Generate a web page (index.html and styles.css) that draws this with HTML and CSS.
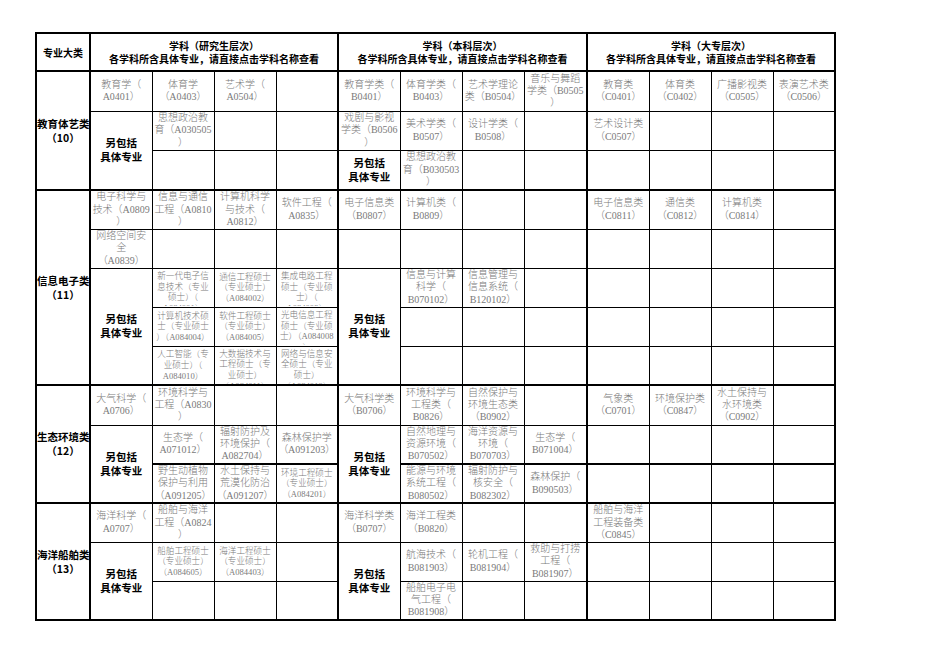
FILE: index.html
```html
<!DOCTYPE html>
<html lang="zh-CN">
<head>
<meta charset="utf-8">
<title>专业大类对照表</title>
<link rel="stylesheet" href="styles.css">
</head>
<body>
<table class="sheet">
<colgroup class="g0"><col class="w0"></colgroup>
<colgroup class="grp"><col class="w"><col class="w"><col class="w"><col class="w"></colgroup>
<colgroup class="grp"><col class="w"><col class="w"><col class="w"><col class="w1"></colgroup>
<colgroup class="grp"><col class="w"><col class="w"><col class="w"><col class="w"></colgroup>
<thead>
<tr class="hr">
<th class="hd">专业大类</th>
<th class="hd" colspan="4">学科（研究生层次）<br>各学科所含具体专业，请直接点击学科名称查看</th>
<th class="hd" colspan="4">学科（本科层次）<br>各学科所含具体专业，请直接点击学科名称查看</th>
<th class="hd" colspan="4">学科（大专层次）<br>各学科所含具体专业，请直接点击学科名称查看</th>
</tr>
</thead>

<tbody class="cg">
<tr class="h40">
<td class="cat" rowspan="3">教育体艺类<br>（10）</td>
<td><div class="c">教育学（<br>A0401）</div></td>
<td><div class="c">体育学<br>（A0403）</div></td>
<td><div class="c">艺术学（<br>A0504）</div></td>
<td></td>
<td><div class="c">教育学类（<br>B0401）</div></td>
<td><div class="c">体育学类（<br>B0403）</div></td>
<td><div class="c">艺术学理论<br>类（B0504）</div></td>
<td><div class="c">音乐与舞蹈<br>学类（B0505<br>）</div></td>
<td><div class="c">教育类<br>（C0401）</div></td>
<td><div class="c">体育类<br>（C0402）</div></td>
<td><div class="c">广播影视类<br>（C0505）</div></td>
<td><div class="c">表演艺术类<br>（C0506）</div></td>
</tr>
<tr class="h39">
<td class="lbl" rowspan="2">另包括<br>具体专业</td>
<td><div class="c">思想政治教<br>育（A030505<br>）</div></td>
<td></td>
<td></td>
<td><div class="c">戏剧与影视<br>学类（B0506<br>）</div></td>
<td><div class="c">美术学类（<br>B0507）</div></td>
<td><div class="c">设计学类（<br>B0508）</div></td>
<td></td>
<td><div class="c">艺术设计类<br>（C0507）</div></td>
<td></td><td></td><td></td>
</tr>
<tr class="h40">
<td></td><td></td><td></td>
<td class="lbl">另包括<br>具体专业</td>
<td><div class="c">思想政治教<br>育（B030503<br>）</div></td>
<td></td><td></td>
<td></td><td></td><td></td><td></td>
</tr>
</tbody>

<tbody class="cg">
<tr class="h39">
<td class="cat" rowspan="5">信息电子类<br>（11）</td>
<td><div class="c">电子科学与<br>技术（A0809<br>）</div></td>
<td><div class="c">信息与通信<br>工程（A0810<br>）</div></td>
<td><div class="c">计算机科学<br>与技术（<br>A0812）</div></td>
<td><div class="c">软件工程（<br>A0835）</div></td>
<td><div class="c">电子信息类<br>（B0807）</div></td>
<td><div class="c">计算机类（<br>B0809）</div></td>
<td></td><td></td>
<td><div class="c">电子信息类<br>（C0811）</div></td>
<td><div class="c">通信类<br>（C0812）</div></td>
<td><div class="c">计算机类<br>（C0814）</div></td>
<td></td>
</tr>
<tr class="h39">
<td><div class="c">网络空间安<br>全<br>（A0839）</div></td>
<td></td><td></td><td></td>
<td></td><td></td><td></td><td></td>
<td></td><td></td><td></td><td></td>
</tr>
<tr class="h39">
<td class="lbl" rowspan="3">另包括<br>具体专业</td>
<td><div class="c s t">新一代电子信<br>息技术（专业<br>硕士）（<br>A084001）</div></td>
<td><div class="c s">通信工程硕士<br>（专业硕士）<br>（A084002）</div></td>
<td><div class="c s t">集成电路工程<br>硕士（专业硕<br>士）（<br>A084003）</div></td>
<td class="lbl" rowspan="3">另包括<br>具体专业</td>
<td><div class="c">信息与计算<br>科学（<br>B070102）</div></td>
<td><div class="c">信息管理与<br>信息系统（<br>B120102）</div></td>
<td></td>
<td></td><td></td><td></td><td></td>
</tr>
<tr class="h39">
<td><div class="c s">计算机技术硕<br>士（专业硕士<br>）（A084004）</div></td>
<td><div class="c s">软件工程硕士<br>（专业硕士）<br>（A084005）</div></td>
<td><div class="c s t">光电信息工程<br>硕士（专业硕<br>士）（A084008<br>）</div></td>
<td></td><td></td><td></td>
<td></td><td></td><td></td><td></td>
</tr>
<tr class="h39">
<td><div class="c s">人工智能（专<br>业硕士）（<br>A084010）</div></td>
<td><div class="c s t">大数据技术与<br>工程硕士（专<br>业硕士）<br>（A084011）</div></td>
<td><div class="c s t">网络与信息安<br>全硕士（专业<br>硕士）<br>（A084012）</div></td>
<td></td><td></td><td></td>
<td></td><td></td><td></td><td></td>
</tr>
</tbody>

<tbody class="cg">
<tr class="h40">
<td class="cat" rowspan="3">生态环境类<br>（12）</td>
<td><div class="c">大气科学（<br>A0706）</div></td>
<td><div class="c">环境科学与<br>工程（A0830<br>）</div></td>
<td></td><td></td>
<td><div class="c">大气科学类<br>（B0706）</div></td>
<td><div class="c">环境科学与<br>工程类（<br>B0826）</div></td>
<td><div class="c">自然保护与<br>环境生态类<br>（B0902）</div></td>
<td></td>
<td><div class="c">气象类<br>（C0701）</div></td>
<td><div class="c">环境保护类<br>（C0847）</div></td>
<td><div class="c">水土保持与<br>水环境类<br>（C0902）</div></td>
<td></td>
</tr>
<tr class="h39">
<td class="lbl" rowspan="2">另包括<br>具体专业</td>
<td><div class="c">生态学（<br>A071012）</div></td>
<td><div class="c">辐射防护及<br>环境保护（<br>A082704）</div></td>
<td><div class="c">森林保护学<br>（A091203）</div></td>
<td class="lbl" rowspan="2">另包括<br>具体专业</td>
<td><div class="c">自然地理与<br>资源环境（<br>B070502）</div></td>
<td><div class="c">海洋资源与<br>环境（<br>B070703）</div></td>
<td><div class="c">生态学（<br>B071004）</div></td>
<td></td><td></td><td></td><td></td>
</tr>
<tr class="h39 thick">
<td><div class="c">野生动植物<br>保护与利用<br>（A091205）</div></td>
<td><div class="c">水土保持与<br>荒漠化防治<br>（A091207）</div></td>
<td><div class="c s">环境工程硕士<br>（专业硕士）<br>（A084201）</div></td>
<td><div class="c">能源与环境<br>系统工程（<br>B080502）</div></td>
<td><div class="c">辐射防护与<br>核安全（<br>B082302）</div></td>
<td><div class="c">森林保护（<br>B090503）</div></td>
<td></td><td></td><td></td><td></td>
</tr>
</tbody>

<tbody class="cg">
<tr class="h39">
<td class="cat" rowspan="3">海洋船舶类<br>（13）</td>
<td><div class="c">海洋科学（<br>A0707）</div></td>
<td><div class="c">船舶与海洋<br>工程（A0824<br>）</div></td>
<td></td><td></td>
<td><div class="c">海洋科学类<br>（B0707）</div></td>
<td><div class="c">海洋工程类<br>（B0820）</div></td>
<td></td><td></td>
<td><div class="c">船舶与海洋<br>工程装备类<br>（C0845）</div></td>
<td></td><td></td><td></td>
</tr>
<tr class="h39">
<td class="lbl" rowspan="2">另包括<br>具体专业</td>
<td><div class="c s">船舶工程硕士<br>（专业硕士）<br>（A084605）</div></td>
<td><div class="c s">海洋工程硕士<br>（专业硕士）<br>（A084403）</div></td>
<td></td>
<td class="lbl" rowspan="2">另包括<br>具体专业</td>
<td><div class="c">航海技术（<br>B081903）</div></td>
<td><div class="c">轮机工程（<br>B081904）</div></td>
<td><div class="c">救助与打捞<br>工程（<br>B081907）</div></td>
<td></td><td></td><td></td><td></td>
</tr>
<tr class="h39">
<td></td><td></td><td></td>
<td><div class="c">船舶电子电<br>气工程（<br>B081908）</div></td>
<td></td><td></td>
<td></td><td></td><td></td><td></td>
</tr>
</tbody>
</table>
</body>
</html>
```

FILE: styles.css
```css
html, body {
  margin: 0;
  padding: 0;
  background: #fff;
}

.sheet {
  border-collapse: collapse;
  table-layout: fixed;
  width: 800px;
  margin: 32px 0 0 35px;
  border: 2px solid #000;
  font-family: "Liberation Serif", "Noto Sans CJK SC", serif;
  font-size: 10px;
  color: #7a7a7a;
}

.w0 { width: 54px; }
.w { width: 62px; }
.w1 { width: 63px; }

.g0, .grp {
  border-left: 2px solid #000;
  border-right: 2px solid #000;
}

.cg {
  border-top: 2px solid #000;
}

.sheet td, .sheet th {
  border: 1px solid #000;
  padding: 0;
  text-align: center;
  vertical-align: middle;
  overflow: hidden;
}

.hr { height: 38px; }
.h39 { height: 39px; }
.h40 { height: 40px; }

.thick td { border-top-width: 2px; }

.hd {
  font-family: "Noto Sans CJK SC", sans-serif;
  font-weight: 700;
  font-size: 10px;
  line-height: 13px;
  color: #000;
  border-bottom: 2px solid #000;
  white-space: nowrap;
  padding-top: 1px;
}

.cat, .lbl {
  font-family: "Noto Sans CJK SC", sans-serif;
  font-weight: 700;
  font-size: 10.5px;
  line-height: 14px;
  color: #000;
  white-space: nowrap;
}

.c {
  height: 37px;
  display: flex;
  flex-direction: column;
  justify-content: center;
  overflow: hidden;
  white-space: nowrap;
  line-height: 12.4px;
  font-size: 10px;
  font-weight: 300;
}

.c.s {
  font-size: 8.6px;
  line-height: 10.6px;
}

.c.t {
  justify-content: flex-start;
  padding-top: 2px;
  box-sizing: border-box;
}
```
